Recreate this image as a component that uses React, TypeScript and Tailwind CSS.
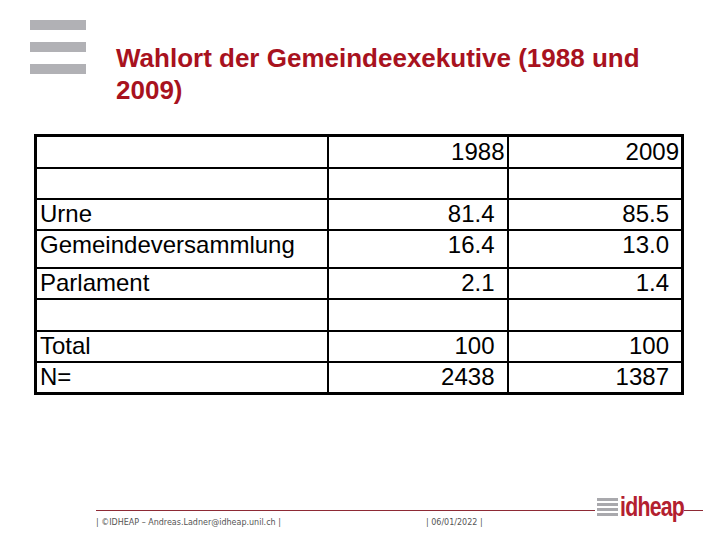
import React from 'react';

const rows: { label: string; a: string; b: string; h: string }[] = [
  { label: '', a: '', b: '', h: 'h-[31px]' },
  { label: 'Urne', a: '81.4', b: '85.5', h: 'h-[31px]' },
  { label: 'Gemeindeversammlung', a: '16.4', b: '13.0', h: 'h-[38px] [&>td]:pb-[7px]' },
  { label: 'Parlament', a: '2.1', b: '1.4', h: 'h-[31px]' },
  { label: '', a: '', b: '', h: 'h-[32px]' },
  { label: 'Total', a: '100', b: '100', h: 'h-[31px]' },
  { label: 'N=', a: '2438', b: '1387', h: 'h-[32px]' },
];

function Bars() {
  return (
    <div className="flex flex-col gap-[12px] w-[56px]">
      <div className="h-[10px] bg-[#b1b1b5]" />
      <div className="h-[10px] bg-[#b1b1b5]" />
      <div className="h-[10px] bg-[#b1b1b5]" />
    </div>
  );
}

function Logo() {
  return (
    <div className="flex items-end gap-[2px] pl-[2px]">
      <div className="flex flex-col gap-[2px] mb-[1px] w-[21px]">
        <div className="h-[3px] bg-[#a9a9ad]" />
        <div className="h-[3px] bg-[#a9a9ad]" />
        <div className="h-[3px] bg-[#a9a9ad]" />
        <div className="h-[3px] bg-[#a9a9ad]" />
      </div>
      <span className="text-[28px] leading-[21px] font-bold text-[#b3202f] tracking-[-1px] scale-x-[0.76] origin-left -mr-[20px]">
        idheap
      </span>
    </div>
  );
}

export default function App() {
  return (
    <div className="w-[720px] h-[540px] bg-white flex flex-col font-['Liberation_Sans',Arial,sans-serif] overflow-hidden">
      <div className="flex items-start pl-[30px] pt-[20px]">
        <Bars />
        <h1 className="ml-[30px] mt-[22px] text-[26px] leading-[32px] font-bold text-[#a8121e] w-[560px]">
          Wahlort der Gemeindeexekutive (1988 und 2009)
        </h1>
      </div>

      <table className="ml-[34px] mt-[28px] w-[647px] table-fixed border-collapse border-[3px] border-black text-[24px] leading-none text-black">
        <colgroup>
          <col className="w-[292px]" />
          <col className="w-[180px]" />
          <col className="w-[175px]" />
        </colgroup>
        <tbody>
          <tr className="h-[32px]">
            <td className="border-2 border-black" />
            <td className="border-2 border-black text-right pr-[2px]">1988</td>
            <td className="border-2 border-black text-right pr-[2px]">2009</td>
          </tr>
          {rows.map((r, i) => (
            <tr key={i} className={r.h}>
              <td className="border-2 border-black pl-[3px]">{r.label}</td>
              <td className="border-2 border-black text-right pr-[12px]">{r.a}</td>
              <td className="border-2 border-black text-right pr-[12px]">{r.b}</td>
            </tr>
          ))}
        </tbody>
      </table>

      <div className="mt-auto mb-[12px] pl-[96px]">
        <div className="flex items-end">
          <div className="flex-1 h-px bg-[#8e2a35] mb-[6px]" />
          <Logo />
          <div className="w-[19px] h-px bg-[#8e2a35] mb-[6px] mr-[17px]" />
        </div>
        <div className="flex text-[8px] leading-[10px] text-[#555] font-['DejaVu_Sans',sans-serif] mt-[1px]">
          <span className="w-[330px]">| ©IDHEAP – Andreas.Ladner@idheap.unil.ch |</span>
          <span>| 06/01/2022 |</span>
        </div>
      </div>
    </div>
  );
}
